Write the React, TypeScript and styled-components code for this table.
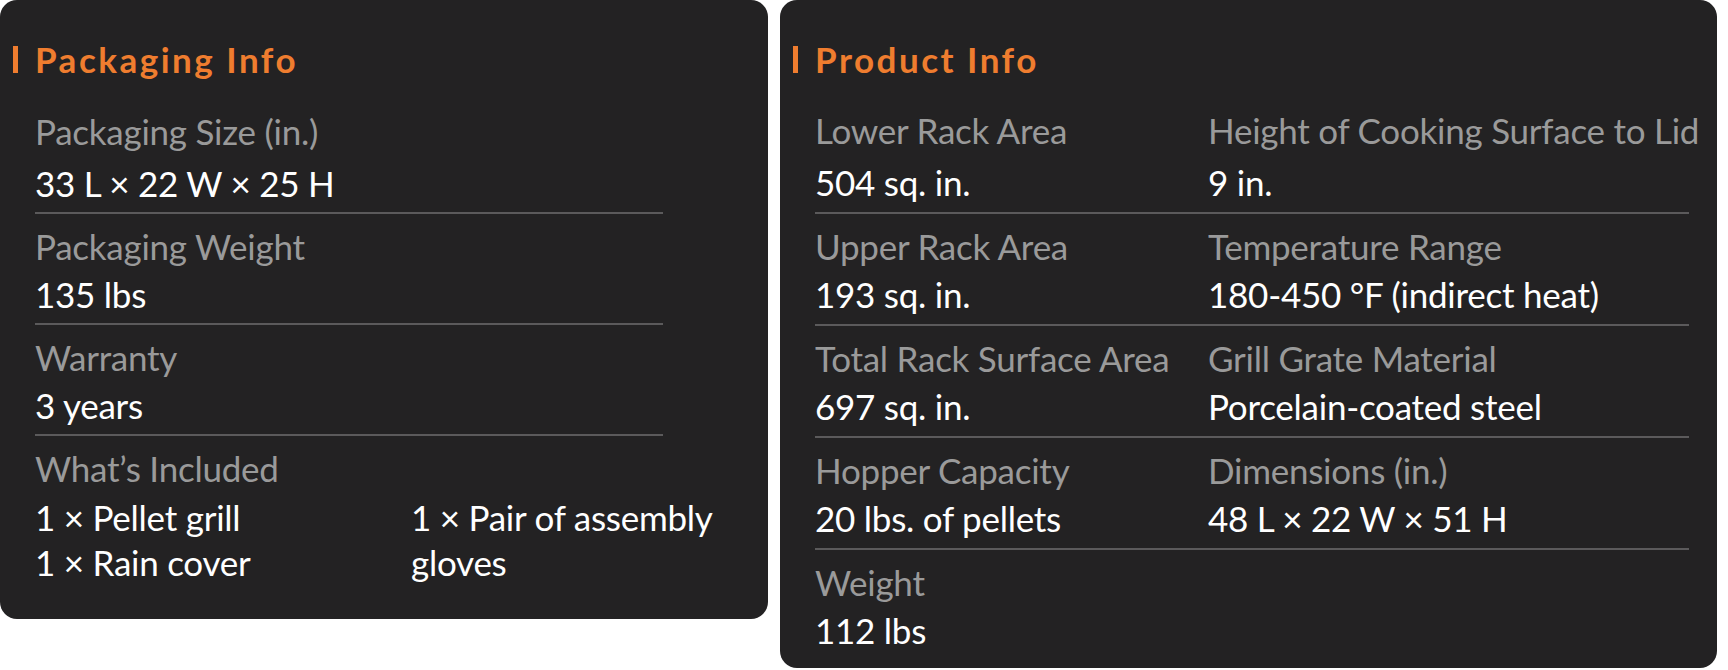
import React from 'react';
import styled, { createGlobalStyle } from 'styled-components';

type Spec = { label: string; value: string };

const ORANGE = '#ef7d2f';
const PANEL_BG = '#232223';
const RULE = '#5b5a5b';

const packagingSpecs: Spec[] = [
  { label: 'Packaging Size (in.)', value: '33 L × 22 W × 25 H' },
  { label: 'Packaging Weight', value: '135 lbs' },
  { label: 'Warranty', value: '3 years' },
];

const includedColumns: string[][] = [
  ['1 × Pellet grill', '1 × Rain cover'],
  ['1 × Pair of assembly gloves'],
];

const productRows: Spec[][] = [
  [
    { label: 'Lower Rack Area', value: '504 sq. in.' },
    { label: 'Height of Cooking Surface to Lid', value: '9 in.' },
  ],
  [
    { label: 'Upper Rack Area', value: '193 sq. in.' },
    { label: 'Temperature Range', value: '180-450 °F (indirect heat)' },
  ],
  [
    { label: 'Total Rack Surface Area', value: '697 sq. in.' },
    { label: 'Grill Grate Material', value: 'Porcelain-coated steel' },
  ],
  [
    { label: 'Hopper Capacity', value: '20 lbs. of pellets' },
    { label: 'Dimensions (in.)', value: '48 L × 22 W × 51 H' },
  ],
  [{ label: 'Weight', value: '112 lbs' }],
];

const App = () => {
  return (
    <>
      <GlobalStyle />
      <Page>
        <Panel $width={768} $padRight={35} $padBottom={8}>
          <Title $gapBelow={15}>
            <Bar />
            Packaging Info
          </Title>
          {packagingSpecs.map((spec, i) => (
            <Row key={spec.label} $width="628px" $ruled $padBottom={5}>
              <Cell $gap={i === 0 ? 4 : 0}>
                <Label>{spec.label}</Label>
                <Value>{spec.value}</Value>
              </Cell>
            </Row>
          ))}
          <Row $ruled={false} $padBottom={5}>
            <Cell>
              <Label>What’s Included</Label>
              <IncludedGrid>
                {includedColumns.map((col, i) => (
                  <div key={i}>
                    {col.map((item) => (
                      <IncludedItem key={item}>{item}</IncludedItem>
                    ))}
                  </div>
                ))}
              </IncludedGrid>
            </Cell>
          </Row>
        </Panel>

        <Panel $width={937} $padRight={28} $padBottom={6}>
          <Title $gapBelow={14}>
            <Bar />
            Product Info
          </Title>
          {productRows.map((row, i) => (
            <Row key={i} $ruled={i < productRows.length - 1} $columns="393px 1fr" $padBottom={6}>
              {row.map((spec) => (
                <Cell key={spec.label} $gap={i === 0 ? 4 : 0} $nowrap>
                  <Label>{spec.label}</Label>
                  <Value>{spec.value}</Value>
                </Cell>
              ))}
            </Row>
          ))}
        </Panel>
      </Page>
    </>
  );
};

export default App;

const GlobalStyle = createGlobalStyle`
  html, body {
    margin: 0;
    padding: 0;
    background: #ffffff;
  }
  body {
    font-family: Lato, 'Open Sans', 'Liberation Sans', sans-serif;
    -webkit-font-smoothing: antialiased;
  }
`;

const Page = styled.main`
  display: flex;
  align-items: flex-start;
  gap: 12px;
`;

const Panel = styled.section<{ $width: number; $padRight: number; $padBottom: number }>`
  box-sizing: border-box;
  width: ${({ $width }) => $width}px;
  padding: 34px ${({ $padRight }) => $padRight}px ${({ $padBottom }) => $padBottom}px 35px;
  background-color: ${PANEL_BG};
  border-radius: 17px;
`;

const Title = styled.h2<{ $gapBelow: number }>`
  display: flex;
  align-items: center;
  gap: 17px;
  margin: 0 0 ${({ $gapBelow }) => $gapBelow}px -22px;
  font-size: 35px;
  line-height: 50px;
  font-weight: 700;
  letter-spacing: 2.5px;
  color: ${ORANGE};
`;

const Bar = styled.span`
  display: block;
  width: 5px;
  height: 27px;
  background-color: ${ORANGE};
`;

const Row = styled.div<{ $width?: string; $ruled: boolean; $columns?: string; $padBottom: number }>`
  display: grid;
  grid-template-columns: ${({ $columns }) => $columns || '1fr'};
  width: ${({ $width }) => $width || 'auto'};
  padding: 7px 0 ${({ $padBottom }) => $padBottom}px;
  border-bottom: 2px solid ${({ $ruled }) => ($ruled ? RULE : 'transparent')};
`;

const Cell = styled.div<{ $gap?: number; $nowrap?: boolean }>`
  display: flex;
  flex-direction: column;
  gap: ${({ $gap }) => $gap || 0}px;
  white-space: ${({ $nowrap }) => ($nowrap ? 'nowrap' : 'normal')};
  font-size: 35px;
  letter-spacing: -0.25px;
`;

const Label = styled.span`
  line-height: 50px;
  color: #9a9a9a;
`;

const Value = styled.span`
  line-height: 47px;
  color: #ffffff;
`;

const IncludedGrid = styled.div`
  display: grid;
  grid-template-columns: 376px 1fr;
  margin: 2px 0 19px;
`;

const IncludedItem = styled.div`
  line-height: 45px;
  color: #ffffff;
`;
